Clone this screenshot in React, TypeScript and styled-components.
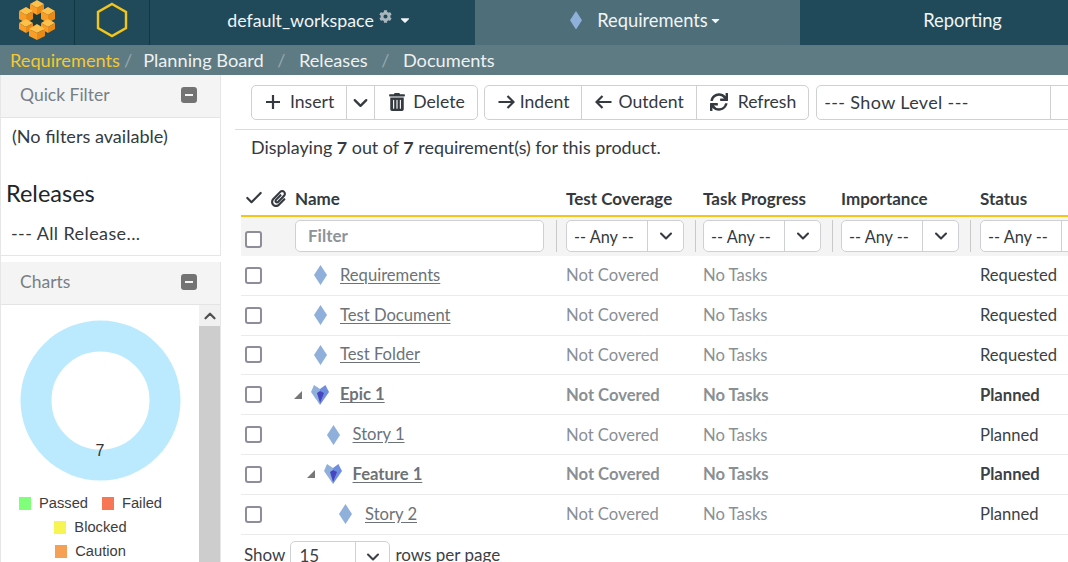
import React from 'react';
import styled, { createGlobalStyle } from 'styled-components';
import { Check as CheckIcon, ChevronDown, ChevronUp } from 'lucide-react';
import { FaCaretDown, FaCog, FaPaperclip, FaSync, FaTrashAlt } from 'react-icons/fa';

const GlobalStyle = createGlobalStyle`
  html, body {
    margin: 0;
    padding: 0;
    background: #fff;
  }
  body {
    font-family: Lato, "Noto Sans", "Liberation Sans", sans-serif;
    font-size: 17px;
    color: #343a40;
  }
  * { box-sizing: border-box; }
`;

const Page = styled.div`
  width: 1068px;
  height: 562px;
  overflow: hidden;
`;

const TopBar = styled.header`
  display: flex;
  height: 45px;
  background: #204a5a;
  color: #f1f5f6;
`;

const LogoCell = styled.div`
  width: 75px;
  flex: none;
  display: flex;
  align-items: center;
  justify-content: center;
  border-right: 1px solid #123642;
  padding-bottom: 5px;
`;

const WorkspaceCell = styled.div`
  width: 325px;
  flex: none;
  display: flex;
  align-items: center;
  justify-content: center;
  padding: 0 0 5px 14px;
  font-size: 17.8px;
  svg { flex: none; }
`;

const Gear = styled(FaCog)`
  color: #a9b7bd;
  font-size: 13px;
  margin: 0 6px 8px 5px;
`;

const NavTab = styled.div<{ $active?: boolean }>`
  display: flex;
  align-items: center;
  justify-content: center;
  flex: none;
  width: ${p => (p.$active ? '325px' : '268px')};
  padding: 0 0 5px ${p => (p.$active ? '17px' : '57px')};
  background: ${p => (p.$active ? '#4e6e7a' : 'transparent')};
  font-size: 18.3px;
`;

const TabIcon = styled.span`
  display: flex;
  margin-right: 15px;
`;

const TabCaret = styled(FaCaretDown)`
  margin-left: 1px;
`;

const SubNav = styled.nav`
  display: flex;
  align-items: center;
  height: 30px;
  padding-left: 10px;
  background: #5e7a82;
  color: #eef2f3;
  font-size: 18.2px;
`;

const SubLink = styled.span<{ $active?: boolean }>`
  color: ${p => (p.$active ? '#f5c92f' : '#eef2f3')};
`;

const Slash = styled.span<{ $tight?: boolean }>`
  color: #93a8ae;
  margin: ${p => (p.$tight ? '0 11px 0 4px' : '0 13.5px')};
`;

const Body = styled.div`
  display: flex;
  height: 487px;
`;

const Sidebar = styled.aside`
  width: 221px;
  flex: none;
  display: flex;
  flex-direction: column;
  gap: 6px;
  border-left: 1px solid #e6e6e6;
  color: #343a40;
`;

const Panel = styled.section`
  border-right: 1px solid #e6e6e6;
  border-bottom: 1px solid #e6e6e6;
  background: #fff;
`;

const PanelHead = styled.div`
  display: flex;
  align-items: center;
  justify-content: space-between;
  height: 43px;
  padding: 0 23px 3px 19px;
  background: #f4f4f4;
  border-bottom: 1px solid #e4e4e4;
  color: #777f86;
  font-size: 17.5px;
`;

const Collapse = styled.span`
  position: relative;
  width: 16px;
  height: 16px;
  border-radius: 3px;
  background: #737373;
  &::after {
    content: '';
    position: absolute;
    left: 4px;
    top: 7px;
    width: 8px;
    height: 2px;
    background: #f4f4f4;
  }
`;

const NoFilters = styled.div`
  padding: 7px 0 0 11px;
  height: 58px;
  font-size: 18.1px;
`;

const ReleaseTitle = styled.h3`
  margin: 0;
  padding-left: 5px;
  font-size: 23.5px;
  font-weight: 400;
  line-height: 34px;
  color: #212529;
`;

const ReleaseValue = styled.div`
  padding: 13px 0 12px 10px;
  font-size: 18px;
  line-height: 20px;
  letter-spacing: 0.4px;
`;

const ChartPanel = styled(Panel)`
  flex: 1;
  display: flex;
  flex-direction: column;
  border-bottom: 0;
  min-height: 0;
`;

const ChartBody = styled.div`
  flex: 1;
  display: flex;
  min-height: 0;
  overflow: hidden;
`;

const ChartArea = styled.div`
  width: 198px;
  flex: none;
  padding-top: 15px;
  display: flex;
  flex-direction: column;
`;

const Donut = styled.svg`
  display: block;
  margin-left: 19px;
  flex: none;
`;

const Legend = styled.div`
  margin-top: 10px;
  padding-right: 19px;
  display: flex;
  flex-wrap: wrap;
  justify-content: center;
  font-family: "Liberation Sans", Arial, sans-serif;
  font-size: 14.7px;
  color: #3d3d3d;
`;

const LegendItem = styled.div`
  display: flex;
  align-items: center;
  height: 24px;
  padding: 0 7px;
`;

const Swatch = styled.span<{ $color: string }>`
  width: 12px;
  height: 13px;
  margin-right: 8px;
  background: ${p => p.$color};
`;

const LegendBreak = styled.div`
  flex-basis: 100%;
  height: 0;
`;

const ScrollTrack = styled.div`
  width: 21px;
  flex: none;
  background: #cdcdcd;
`;

const ScrollUp = styled.div`
  height: 21px;
  background: #f1f1f1;
  color: #505050;
  display: flex;
  align-items: center;
  justify-content: center;
`;

const Main = styled.main`
  flex: 1;
  min-width: 0;
  padding-top: 10px;
  margin-left: 14px;
  overflow: hidden;
`;

const Toolbar = styled.div`
  display: flex;
  gap: 6px;
  height: 45px;
  padding-left: 16px;
  border-bottom: 1px solid #dcdcdc;
`;

const ButtonGroup = styled.div`
  display: flex;
  flex: none;
  height: 35px;
  border: 1px solid #ced1d4;
  border-radius: 5px;
`;

const ToolButton = styled.div<{ $gap?: number }>`
  display: flex;
  align-items: center;
  gap: ${p => p.$gap ?? 9}px;
  padding: 0 12px 2px 13px;
  font-size: 17.6px;
  color: #343a40;
  white-space: nowrap;
  & + & { border-left: 1px solid #ced1d4; }
`;

const SplitCaret = styled(ToolButton)`
  padding: 0 2px;
  width: 28px;
  justify-content: center;
`;

const LevelSelect = styled(ButtonGroup)`
  width: 300px;
  margin-left: 1px;
`;

const LevelValue = styled.div`
  width: 234px;
  padding: 0 0 2px 7px;
  display: flex;
  align-items: center;
  font-size: 18px;
  letter-spacing: 0.35px;
  border-right: 1px solid #ced1d4;
`;

const SelectChevron = styled.div`
  flex: 1;
  display: flex;
  align-items: center;
  justify-content: center;
`;

const Summary = styled.p`
  margin: 0;
  padding: 6px 0 0 16px;
  height: 50px;
  font-size: 17.9px;
  line-height: 22px;
`;

const Table = styled.div`
  width: 827px;
  margin-left: 6px;
`;

const gridColumns = '54px 271px 137px 138px 139px 1fr';

const HeadRow = styled.div`
  display: grid;
  grid-template-columns: ${gridColumns};
  align-items: center;
  height: 37px;
  padding-top: 1px;
  border-bottom: 2px solid #f5c518;
  font-weight: 700;
  font-size: 17px;
  color: #343a40;
  white-space: nowrap;
`;

const HeadIcons = styled.div`
  display: flex;
  align-items: center;
  gap: 6px;
  padding-left: 3px;
`;

const FilterRow = styled.div`
  display: grid;
  grid-template-columns: ${gridColumns};
  align-items: center;
  height: 39px;
  background: #f4f4f4;
`;

const Check = styled.span`
  display: block;
  width: 17px;
  height: 17px;
  margin-left: 4px;
  border: 2px solid #8f8d9c;
  border-radius: 3px;
  background: #fff;
`;

const FilterCheck = styled(Check)`
  margin-top: 6px;
`;

const FilterCell = styled.div<{ $wide?: boolean }>`
  position: relative;
  height: 32px;
  margin-bottom: 1px;
  width: ${p => (p.$wide ? '249px' : '118px')};
  &::after {
    content: '';
    position: absolute;
    top: 0;
    bottom: 0;
    right: ${p => (p.$wide ? '-13px' : '-12px')};
    width: 1px;
    background: #c9c9c9;
  }
`;

const FilterInput = styled.div`
  height: 100%;
  padding: 0 0 2px 12px;
  display: flex;
  align-items: center;
  border: 1px solid #ced1d4;
  border-radius: 5px;
  background: #fff;
  color: #8d9398;
  font-weight: 700;
  font-size: 17px;
`;

const AnySelect = styled.div`
  height: 100%;
  display: flex;
  border: 1px solid #ced1d4;
  border-radius: 5px;
  background: #fff;
  font-size: 16.3px;
`;

const AnyValue = styled.div`
  width: 81px;
  flex: none;
  display: flex;
  align-items: center;
  padding-left: 7px;
  border-right: 1px solid #ced1d4;
  white-space: nowrap;
`;

const Row = styled.div<{ $bold?: boolean }>`
  display: grid;
  grid-template-columns: ${gridColumns};
  align-items: center;
  height: 39.8px;
  border-bottom: 1px solid #ebebeb;
  font-size: 16.6px;
  font-weight: ${p => (p.$bold ? 700 : 400)};
  color: #8a8f94;
  white-space: nowrap;
`;

const NameCell = styled.div<{ $level: number }>`
  display: flex;
  align-items: center;
  padding-left: ${p => p.$level * 12.5}px;
  color: #6c7277;
`;

const Expander = styled.span`
  width: 18px;
  flex: none;
  &::before {
    content: '';
    display: block;
    width: 0;
    height: 0;
    margin-left: -1px;
    border-style: solid;
    border-width: 0 0 8px 8px;
    border-color: transparent transparent #777 transparent;
  }
`;

const ExpanderGap = styled.span`
  width: 18px;
  flex: none;
`;

const IconSlot = styled.span<{ $parent?: boolean }>`
  width: 27px;
  flex: none;
  display: flex;
  svg {
    display: block;
    margin-left: ${p => (p.$parent ? '-2px' : '1px')};
  }
`;

const NameLink = styled.span`
  margin-top: -1px;
  text-decoration: underline;
  text-underline-offset: 2px;
`;

const StatusCell = styled.div`
  color: #3b4146;
`;

const Pager = styled.div`
  display: flex;
  align-items: flex-start;
  gap: 5px;
  padding: 6px 0 0 9px;
  font-size: 17px;
  color: #3b4146;
`;

const PagerSelect = styled.div`
  display: flex;
  width: 100px;
  height: 32px;
  border: 1px solid #ced1d4;
  border-radius: 5px;
`;

const PagerValue = styled.div`
  width: 65px;
  padding: 3px 0 0 8px;
  border-right: 1px solid #ced1d4;
`;

const PagerLabel = styled.span`
  line-height: 28px;
`;

const Logo = () => (
  <svg width="36" height="40" viewBox="0 0 36 40">
    <rect x="12" y="13" width="12" height="13" fill="#1c3c3c" />
    <polygon points="18,0 25,4 18,8 11,4" fill="#fdc04a" />
    <polygon points="11,4 18,8 18,15 11,11" fill="#f99d26" />
    <polygon points="25,4 18,8 18,15 25,11" fill="#ea8a16" />
    <polygon points="7,7 14,11 7,15 0,11" fill="#fdc04a" />
    <polygon points="0,11 7,15 7,23 0,19" fill="#f99d26" />
    <polygon points="14,11 7,15 7,23 14,19" fill="#ea8a16" />
    <polygon points="29,7 36,11 29,15 22,11" fill="#fdc04a" />
    <polygon points="22,11 29,15 29,23 22,19" fill="#f99d26" />
    <polygon points="36,11 29,15 29,23 36,19" fill="#ea8a16" />
    <polygon points="7,19 14,23 7,27 0,23" fill="#fdc04a" />
    <polygon points="0,23 7,27 7,33 0,29" fill="#f99d26" />
    <polygon points="14,23 7,27 7,33 14,29" fill="#ea8a16" />
    <polygon points="29,19 36,23 29,27 22,23" fill="#fdc04a" />
    <polygon points="22,23 29,27 29,33 22,29" fill="#f99d26" />
    <polygon points="36,23 29,27 29,33 36,29" fill="#ea8a16" />
    <polygon points="18,24 26,29 18,33 10,29" fill="#fdc04a" />
    <polygon points="10,29 18,33 18,40 10,36" fill="#f99d26" />
    <polygon points="26,29 18,33 18,40 26,36" fill="#ea8a16" />
  </svg>
);

const Hexagon = () => (
  <svg width="32" height="36" viewBox="0 0 32 36">
    <polygon points="16,2 30,10 30,26 16,34 2,26 2,10" fill="none" stroke="#f5c518" strokeWidth="2.4" />
  </svg>
);

const Diamond = ({ size = 13 }: { size?: number }) => (
  <svg width={size} height={size * 1.55} viewBox="0 0 13 20">
    <polygon points="6.5,0 13,10 6.5,20 0,10" fill="#8fb0da" />
  </svg>
);

const EpicIcon = () => (
  <svg width="18" height="20" viewBox="0 0 18 20">
    <polygon points="0,7 3,0 9,4 9,20" fill="#8fb0da" />
    <polygon points="9,4 14.4,0 18,7 9,20" fill="#6f8ee0" />
    <polygon points="6,8 9,6 13,8 9,18" fill="#4646c0" />
  </svg>
);

const PlusGlyph = () => (
  <svg width="16" height="16" viewBox="0 0 16 16">
    <path d="M8 1v14M1 8h14" fill="none" stroke="currentColor" strokeWidth="2.2" />
  </svg>
);

const ArrowGlyph = ({ left }: { left?: boolean }) => (
  <svg width="17" height="14" viewBox="0 0 17 14">
    <path
      d={left ? 'M16.5 7H2M7.5 1L1.5 7l6 6' : 'M0.5 7H15M9.5 1l6 6-6 6'}
      fill="none"
      stroke="currentColor"
      strokeWidth="2.2"
    />
  </svg>
);

const rows = [
  { name: 'Requirements', level: 0, status: 'Requested' },
  { name: 'Test Document', level: 0, status: 'Requested' },
  { name: 'Test Folder', level: 0, status: 'Requested' },
  { name: 'Epic 1', level: 0, status: 'Planned', parent: true },
  { name: 'Story 1', level: 1, status: 'Planned' },
  { name: 'Feature 1', level: 1, status: 'Planned', parent: true },
  { name: 'Story 2', level: 2, status: 'Planned' },
];

const AnyFilter = () => (
  <FilterCell>
    <AnySelect>
      <AnyValue>-- Any --</AnyValue>
      <SelectChevron>
        <ChevronDown size={20} strokeWidth={2.5} color="#343a40" />
      </SelectChevron>
    </AnySelect>
  </FilterCell>
);

export default function App() {
  return (
    <Page>
      <GlobalStyle />
      <TopBar>
        <LogoCell>
          <Logo />
        </LogoCell>
        <LogoCell>
          <Hexagon />
        </LogoCell>
        <WorkspaceCell>
          default_workspace
          <Gear />
          <FaCaretDown size={14} />
        </WorkspaceCell>
        <NavTab $active>
          <TabIcon>
            <Diamond size={12} />
          </TabIcon>
          Requirements
          <TabCaret size={13} />
        </NavTab>
        <NavTab>Reporting</NavTab>
      </TopBar>
      <SubNav>
        <SubLink $active>Requirements</SubLink>
        <Slash $tight>/</Slash>
        <SubLink>Planning Board</SubLink>
        <Slash>/</Slash>
        <SubLink>Releases</SubLink>
        <Slash>/</Slash>
        <SubLink>Documents</SubLink>
      </SubNav>
      <Body>
        <Sidebar>
          <Panel>
            <PanelHead>
              Quick Filter
              <Collapse />
            </PanelHead>
            <NoFilters>(No filters available)</NoFilters>
            <ReleaseTitle>Releases</ReleaseTitle>
            <ReleaseValue>--- All Release...</ReleaseValue>
          </Panel>
          <ChartPanel>
            <PanelHead>
              Charts
              <Collapse />
            </PanelHead>
            <ChartBody>
              <ChartArea>
                <Donut width="161" height="161" viewBox="0 0 161 161">
                  <circle cx="80.5" cy="80.5" r="64.5" fill="none" stroke="#bbeaff" strokeWidth="31" />
                  <text x="80" y="136" textAnchor="middle" fontFamily="Liberation Sans, Arial, sans-serif" fontSize="16" fill="#333">
                    7
                  </text>
                </Donut>
                <Legend>
                  <LegendItem>
                    <Swatch $color="#80ff7a" />
                    Passed
                  </LegendItem>
                  <LegendItem>
                    <Swatch $color="#f67655" />
                    Failed
                  </LegendItem>
                  <LegendBreak />
                  <LegendItem>
                    <Swatch $color="#f6f553" />
                    Blocked
                  </LegendItem>
                  <LegendBreak />
                  <LegendItem>
                    <Swatch $color="#f6a055" />
                    Caution
                  </LegendItem>
                </Legend>
              </ChartArea>
              <ScrollTrack>
                <ScrollUp>
                  <ChevronUp size={18} strokeWidth={3} />
                </ScrollUp>
              </ScrollTrack>
            </ChartBody>
          </ChartPanel>
        </Sidebar>
        <Main>
          <Toolbar>
            <ButtonGroup>
              <ToolButton>
                <PlusGlyph />
                Insert
              </ToolButton>
              <SplitCaret>
                <ChevronDown size={24} strokeWidth={2.4} />
              </SplitCaret>
              <ToolButton $gap={7}>
                <FaTrashAlt size={18} />
                Delete
              </ToolButton>
            </ButtonGroup>
            <ButtonGroup>
              <ToolButton $gap={5}>
                <ArrowGlyph />
                Indent
              </ToolButton>
              <ToolButton $gap={6}>
                <ArrowGlyph left />
                Outdent
              </ToolButton>
              <ToolButton $gap={10}>
                <FaSync size={18} />
                Refresh
              </ToolButton>
            </ButtonGroup>
            <LevelSelect>
              <LevelValue>--- Show Level ---</LevelValue>
              <SelectChevron>
                <ChevronDown size={24} strokeWidth={2.4} />
              </SelectChevron>
            </LevelSelect>
          </Toolbar>
          <Summary>
            Displaying <b>7</b> out of <b>7</b> requirement(s) for this product.
          </Summary>
          <Table>
            <HeadRow>
              <HeadIcons>
                <CheckIcon size={20} strokeWidth={2.6} />
                <FaPaperclip size={17} />
              </HeadIcons>
              <div>Name</div>
              <div>Test Coverage</div>
              <div>Task Progress</div>
              <div>Importance</div>
              <div>Status</div>
            </HeadRow>
            <FilterRow>
              <FilterCheck />
              <FilterCell $wide>
                <FilterInput>Filter</FilterInput>
              </FilterCell>
              <AnyFilter />
              <AnyFilter />
              <AnyFilter />
              <AnyFilter />
            </FilterRow>
            {rows.map(row => (
              <Row key={row.name} $bold={row.parent}>
                <Check />
                <NameCell $level={row.level}>
                  {row.parent ? <Expander /> : <ExpanderGap />}
                  <IconSlot $parent={row.parent}>{row.parent ? <EpicIcon /> : <Diamond />}</IconSlot>
                  <NameLink>{row.name}</NameLink>
                </NameCell>
                <div>Not Covered</div>
                <div>No Tasks</div>
                <div />
                <StatusCell>{row.status}</StatusCell>
              </Row>
            ))}
          </Table>
          <Pager>
            <PagerLabel>Show</PagerLabel>
            <PagerSelect>
              <PagerValue>15</PagerValue>
              <SelectChevron>
                <ChevronDown size={20} strokeWidth={2.5} />
              </SelectChevron>
            </PagerSelect>
            <PagerLabel>rows per page</PagerLabel>
          </Pager>
        </Main>
      </Body>
    </Page>
  );
}
